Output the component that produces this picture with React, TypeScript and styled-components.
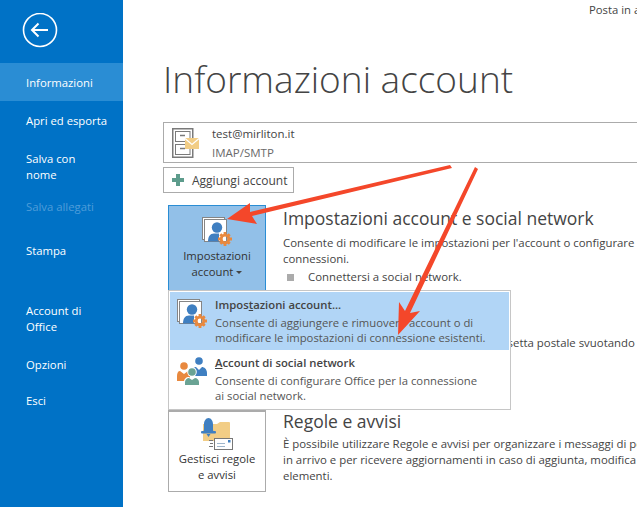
import React from "react";
import styled, { createGlobalStyle } from "styled-components";

const Global = createGlobalStyle`
  html, body { margin: 0; padding: 0; background: #fff; }
  body { font-family: "Open Sans", "Noto Sans", sans-serif; color: #444; }
`;

const Page = styled.div`
  position: relative;
  display: flex;
  width: 637px;
  height: 507px;
  overflow: hidden;
  background: #fff;
  font-size: 11.3px;
`;

const Sidebar = styled.nav`
  flex: 0 0 123px;
  background: #0072c6;
  padding-top: 13px;
  display: flex;
  flex-direction: column;
  color: #fff;
`;

const BackButton = styled.div`
  height: 50px;
  padding-left: 22px;
`;

const NavItem = styled.div<{ $active?: boolean; $disabled?: boolean; $gap?: number }>`
  padding: 12px 12px 10px 26px;
  margin-bottom: ${(p) => p.$gap ?? 0}px;
  line-height: 16px;
  background: ${(p) => (p.$active ? "#2a8dd4" : "transparent")};
  color: ${(p) => (p.$disabled ? "#4f9dd9" : "#fff")};
`;

const Main = styled.main`
  flex: 1;
  min-width: 0;
  padding-left: 40px;
  position: relative;
`;

const TopLink = styled.div`
  height: 18px;
  line-height: 20px;
  padding-left: 426px;
  white-space: nowrap;
  color: #444;
`;

const Title = styled.h1`
  margin: 0;
  height: 104px;
  padding-top: 36px;
  box-sizing: border-box;
  font-size: 37px;
  line-height: 50px;
  font-weight: 300;
  color: #444;
  white-space: nowrap;
`;

const AccountBox = styled.div`
  display: flex;
  width: 520px;
  height: 41px;
  box-sizing: border-box;
  border: 1px solid #ababab;
  padding-left: 8px;
  gap: 12px;
  align-items: center;
`;

const AccountText = styled.div`
  line-height: 19px;
  font-size: 11.5px;
`;

const Muted = styled.div`
  color: #6a6a6a;
`;

const AddButton = styled.div`
  display: flex;
  align-items: center;
  gap: 8px;
  width: 131px;
  height: 26px;
  box-sizing: border-box;
  margin-top: 4px;
  padding-left: 8px;
  border: 1px solid #ababab;
  white-space: nowrap;
  font-size: 12px;
`;

const Section = styled.section<{ $top: number; $height: number }>`
  display: flex;
  margin-top: ${(p) => p.$top}px;
  margin-left: 5px;
  height: ${(p) => p.$height}px;
`;

const BigButton = styled.div<{ $active?: boolean; $pad?: number }>`
  flex: 0 0 98px;
  box-sizing: border-box;
  border: 1px solid ${(p) => (p.$active ? "#2a8dd4" : "#ababab")};
  background: ${(p) => (p.$active ? "#92c0e8" : "#fff")};
  display: flex;
  flex-direction: column;
  align-items: center;
  padding-top: ${(p) => p.$pad ?? 11}px;
  text-align: center;
  line-height: 16px;
  color: #333;
`;

const BigLabel = styled.div`
  margin-top: 1px;
`;

const Caret = styled.span`
  display: inline-block;
  width: 0;
  height: 0;
  margin-left: 3px;
  vertical-align: 2px;
  border-left: 3px solid transparent;
  border-right: 3px solid transparent;
  border-top: 3px solid #444;
`;

const SectionBody = styled.div<{ $shift?: number }>`
  margin-left: 17px;
  margin-top: ${(p) => p.$shift ?? 0}px;
  width: 400px;
  line-height: 16px;
  white-space: nowrap;
  font-size: 11.4px;
`;

const Heading = styled.h2<{ $gap?: number }>`
  margin: 0 0 ${(p) => p.$gap ?? 3}px;
  font-size: 17.5px;
  line-height: 27px;
  font-weight: 400;
  color: #444;
`;

const BulletRow = styled.div`
  display: flex;
  align-items: center;
  gap: 14px;
  margin-top: 2px;
  padding-left: 4px;
`;

const Bullet = styled.span`
  width: 7px;
  height: 7px;
  background: #ababab;
`;

const Menu = styled.div`
  position: absolute;
  left: 45px;
  top: 290px;
  width: 343px;
  height: 120px;
  box-sizing: border-box;
  background: #fff;
  border: 1px solid #c6c6c6;
  padding: 1px;
`;

const MenuItem = styled.div<{ $active?: boolean; $height: number }>`
  display: flex;
  height: ${(p) => p.$height}px;
  background: ${(p) => (p.$active ? "#b1d5f6" : "transparent")};
  padding: 5px 0 0 7px;
  box-sizing: border-box;
  gap: 7px;
`;

const MenuIconBox = styled.div`
  flex: 0 0 31px;
  padding-top: 2px;
`;

const MenuTexts = styled.div`
  line-height: 15px;
  color: #555;
  white-space: nowrap;
`;

const MenuTitle = styled.div`
  font-weight: 600;
  color: #444;
  margin-bottom: 3px;
`;

const Arrows = styled.svg`
  position: absolute;
  left: 0;
  top: 0;
  pointer-events: none;
`;

const BackIcon = () => (
  <svg width="36" height="36" viewBox="0 0 36 36" fill="none" stroke="#fff">
    <circle cx="18" cy="17" r="16.500" strokeWidth="1.600" />
    <path d="M10 17H26M16.500 10.500L10 17l6.500 6.500" strokeWidth="2" />
  </svg>
);

const CabinetIcon = () => (
  <svg width="28" height="30" viewBox="0 0 28 30" fill="none">
    <rect x="0.750" y="0.750" width="20" height="28.500" stroke="#7a7a7a" strokeWidth="1.500" fill="#fff" />
    <rect x="3.500" y="3.500" width="14.500" height="10" stroke="#7a7a7a" />
    <rect x="3.500" y="16.500" width="14.500" height="10" stroke="#7a7a7a" />
    <path d="M8 7.500h5M8 20.500h5" stroke="#7a7a7a" strokeWidth="1.500" />
    <rect x="13" y="10" width="14" height="11" fill="#f2cd85" />
    <path d="M13 10.500l7 6 7-6" stroke="#fff" strokeWidth="1.200" />
  </svg>
);

const PlusIcon = () => (
  <svg width="12" height="12" viewBox="0 0 12 12">
    <path d="M4 0h4v4h4v4H8v4H4V8H0V4h4z" fill="#5d9c8c" />
  </svg>
);

const AccountIcon = () => (
  <svg width="31" height="30" viewBox="0 0 31 30">
    <rect x="0.500" y="0.500" width="22" height="22" fill="#fff" stroke="#858585" />
    <rect x="2.500" y="2.500" width="22" height="22" fill="#fff" stroke="#858585" />
    <circle cx="15" cy="10.500" r="5.200" fill="#3f7fc1" />
    <path d="M6 24.500c0-5 2-8 6-8h5v8z" fill="#3f7fc1" />
    <g fill="none" stroke="#e8893f" strokeWidth="2.800">
      <circle cx="23" cy="22" r="3.800" />
      <path d="M23 15v3M23 26v3M16 22h3M27 22h3M18.300 17.300l2 2M25.700 24.700l2 2M18.300 26.700l2-2M25.700 19.300l2-2" />
    </g>
  </svg>
);

const SocialIcon = () => (
  <svg width="30" height="28" viewBox="0 0 30 28">
    <circle cx="22" cy="4" r="3.800" fill="#3f7fc1" />
    <path d="M15 16c0-4 2-6 4-6l3 3 3-3c2 0 5 2 5 6v3H17z" fill="#3f7fc1" />
    <circle cx="7" cy="9" r="3.800" fill="#e8893f" />
    <path d="M0 24v-5c0-3 1-5 3-5l4 3 4-3c2 0 2 1 2 2v5l-6 3z" fill="#e8893f" />
    <circle cx="15" cy="15" r="4.800" fill="#fff" />
    <circle cx="15" cy="15" r="3.800" fill="#6aa394" />
    <path d="M7 28v-3c0-3 2-5 5-5l3 2 3-2c3 0 5 2 5 5v3z" fill="#fff" />
    <path d="M8 28v-3c0-2 2-4 4-4l3 2 3-2c2 0 4 2 4 4v3z" fill="#6aa394" />
  </svg>
);

const RulesIcon = () => (
  <svg width="32" height="32" viewBox="0 0 32 32">
    <path d="M2 6h14l3-2h9a1 1 0 0 1 1 1v18H2z" fill="#f2cd85" />
    <path d="M2 14c1-1 1-2 1-4V6c0-3 2-6 4.500-6S12 3 12 6v4c0 2 0 3 1 4z" fill="#3f7fc1" />
    <rect x="0" y="13" width="15" height="2.500" rx="1" fill="#3f7fc1" />
    <path d="M5.500 16h4l-2 3z" fill="#3f7fc1" />
    <rect x="13.500" y="20.500" width="18" height="11" fill="#fff" stroke="#777" />
    <path d="M16 25.500h8M16 28.500h8" stroke="#9fb6cc" />
    <rect x="27" y="22" width="2.500" height="2.500" fill="#3f7fc1" />
    <path d="M8 22.500h4M9 25.500h3M8 28.500h4" stroke="#777" />
  </svg>
);

export default function App() {
  return (
    <>
      <Global />
      <Page>
        <Sidebar>
          <BackButton>
            <BackIcon />
          </BackButton>
          <NavItem $active>Informazioni</NavItem>
          <NavItem>Apri ed esporta</NavItem>
          <NavItem $gap={-6}>
            Salva con
            <br />
            nome
          </NavItem>
          <NavItem $disabled $gap={6}>Salva allegati</NavItem>
          <NavItem $gap={22}>Stampa</NavItem>
          <NavItem>
            Account di
            <br />
            Office
          </NavItem>
          <NavItem $gap={-2}>Opzioni</NavItem>
          <NavItem>Esci</NavItem>
        </Sidebar>
        <Main>
          <TopLink>Posta in a</TopLink>
          <Title>Informazioni account</Title>
          <AccountBox>
            <CabinetIcon />
            <AccountText>
              <div>test@mirliton.it</div>
              <Muted>IMAP/SMTP</Muted>
            </AccountText>
          </AccountBox>
          <AddButton>
            <PlusIcon />
            Aggiungi account
          </AddButton>
          <Section $top={12} $height={86}>
            <BigButton $active>
              <AccountIcon />
              <BigLabel>
                Impostazioni
                <br />
                account
                <Caret />
              </BigLabel>
            </BigButton>
            <SectionBody>
              <Heading>Impostazioni account e social network</Heading>
              Consente di modificare le impostazioni per l'account o configurare le
              <br />
              connessioni.
              <BulletRow>
                <Bullet />
                Connettersi a social network.
              </BulletRow>
            </SectionBody>
          </Section>
          <Section $top={9} $height={111}>
            <BigButton />
            <SectionBody $shift={5}>
              <Heading>Strumenti di pulizia</Heading>
              Consente di gestire le dimensioni della cassetta postale svuotando
            </SectionBody>
          </Section>
          <Section $top={0} $height={81}>
            <BigButton $pad={6}>
              <RulesIcon />
              <BigLabel>
                Gestisci regole
                <br />e avvisi
              </BigLabel>
            </BigButton>
            <SectionBody $shift={-3}>
              <Heading $gap={1}>Regole e avvisi</Heading>
              È possibile utilizzare Regole e avvisi per organizzare i messaggi di posta
              <br />
              in arrivo e per ricevere aggiornamenti in caso di aggiunta, modifica o
              <br />
              elementi.
            </SectionBody>
          </Section>
          <Menu>
            <MenuItem $active $height={58}>
              <MenuIconBox>
                <AccountIcon />
              </MenuIconBox>
              <MenuTexts>
                <MenuTitle>
                  Impos<u>t</u>azioni account...
                </MenuTitle>
                Consente di aggiungere e rimuovere account o di
                <br />
                modificare le impostazioni di connessione esistenti.
              </MenuTexts>
            </MenuItem>
            <MenuItem $height={58}>
              <MenuIconBox>
                <SocialIcon />
              </MenuIconBox>
              <MenuTexts>
                <MenuTitle>
                  <u>A</u>ccount di social network
                </MenuTitle>
                Consente di configurare Office per la connessione
                <br />
                ai social network.
              </MenuTexts>
            </MenuItem>
          </Menu>
        </Main>
        <Arrows width="637" height="507" viewBox="0 0 637 507">
          <g fill="#f4472a">
            <path d="M450 165L452 168 252 216 257 224 227 219 250 203 250 212z" />
            <path d="M475 167L478 169 410 313 420 311 398 335 399 302 405 311z" />
          </g>
        </Arrows>
      </Page>
    </>
  );
}
